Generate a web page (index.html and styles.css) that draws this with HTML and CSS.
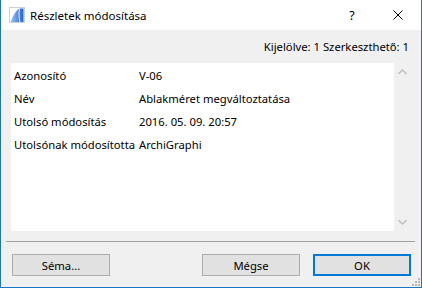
FILE: index.html
```html
<!DOCTYPE html>
<html>
<head>
<meta charset="utf-8">
<link rel="stylesheet" href="styles.css">
</head>
<body>
<div class="window">
  <div class="titlebar">
    <svg class="appicon" width="16" height="16" viewBox="0 0 16 16">
      <defs>
        <linearGradient id="g" x1="0" y1="0" x2="1" y2="0">
          <stop offset="0" stop-color="#9cc4f2"/>
          <stop offset="1" stop-color="#1f63d8"/>
        </linearGradient>
      </defs>
      <rect x="0.5" y="0.5" width="15" height="15" fill="#fff" stroke="#c8d2de"/>
      <path d="M1.5 15 C4 9 7 3 10.5 1.5 L14.5 1.5 L14.5 15 Z" fill="url(#g)"/>
      <path d="M10.5 1.5 C9.5 6 10 11 11 15" fill="none" stroke="#ffffff" stroke-width="0.9"/>
    </svg>
    <span class="title">Részletek módosítása</span>
    <span class="spacer"></span>
    <span class="tbtn">?</span>
    <span class="tbtn">
      <svg width="10" height="10" viewBox="0 0 10 10"><path d="M0.5 0.5 L9.5 9.5 M9.5 0.5 L0.5 9.5" stroke="#000" stroke-width="1"/></svg>
    </span>
  </div>
  <div class="status">Kijelölve: 1 Szerkeszthető: 1</div>
  <div class="panel">
    <div class="list">
      <div class="row"><span class="label">Azonosító</span><span class="value">V-06</span></div>
      <div class="row"><span class="label">Név</span><span class="value">Ablakméret megváltoztatása</span></div>
      <div class="row"><span class="label">Utolsó módosítás</span><span class="value">2016. 05. 09. 20:57</span></div>
      <div class="row"><span class="label">Utolsónak módosította</span><span class="value">ArchiGraphi</span></div>
    </div>
    <div class="scrollbar">
      <svg width="9" height="6" viewBox="0 0 9 6"><path d="M0.5 5 L4.5 1 L8.5 5" fill="none" stroke="#c2c2c2" stroke-width="1.6"/></svg>
      <svg width="9" height="6" viewBox="0 0 9 6"><path d="M0.5 1 L4.5 5 L8.5 1" fill="none" stroke="#c2c2c2" stroke-width="1.6"/></svg>
    </div>
  </div>
  <div class="separator"></div>
  <div class="buttons">
    <div class="btn">Séma...</div>
    <span class="spacer"></span>
    <div class="btn">Mégse</div>
    <div class="btn default">OK</div>
  </div>
  <svg class="grip" width="8" height="8" viewBox="0 0 8 8">
    <rect x="6" y="0" width="2" height="2" fill="#b8b8b8"/>
    <rect x="3" y="3" width="2" height="2" fill="#b8b8b8"/>
    <rect x="6" y="3" width="2" height="2" fill="#b8b8b8"/>
    <rect x="0" y="6" width="2" height="2" fill="#b8b8b8"/>
    <rect x="3" y="6" width="2" height="2" fill="#b8b8b8"/>
    <rect x="6" y="6" width="2" height="2" fill="#b8b8b8"/>
  </svg>
</div>
</body>
</html>
```
FILE: styles.css
```css
html, body {
  margin: 0;
  padding: 0;
  background: #ffffff;
}
.window {
  position: relative;
  width: 422px;
  height: 288px;
  box-sizing: border-box;
  border: 1px solid #1b75c9;
  border-top: none;
  background: #f0f0f0;
  display: flex;
  flex-direction: column;
  font-family: "Noto Sans", "Open Sans", sans-serif;
  font-size: 11.25px;
  color: #000;
}
.titlebar {
  height: 30px;
  background: #ffffff;
  display: flex;
  align-items: center;
}
.appicon {
  margin-left: 8px;
  flex: none;
}
.title {
  margin-left: 5px;
  font-size: 11.5px;
  color: #000;
}
.spacer {
  flex: 1;
}
.tbtn {
  width: 46px;
  height: 30px;
  display: flex;
  align-items: center;
  justify-content: center;
  font-size: 12.5px;
}
.status {
  height: 33px;
  display: flex;
  align-items: center;
  justify-content: flex-end;
  padding-right: 12px;
  box-sizing: border-box;
}
.panel {
  margin-left: 10px;
  width: 399px;
  height: 168px;
  display: flex;
  flex: none;
}
.list {
  width: 383px;
  background: #ffffff;
  padding-top: 1px;
  box-sizing: border-box;
}
.row {
  height: 23px;
  display: flex;
  align-items: center;
  padding-left: 3px;
}
.label {
  width: 125px;
  flex: none;
  white-space: nowrap;
}
.value {
  white-space: nowrap;
}
.scrollbar {
  width: 16px;
  display: flex;
  flex-direction: column;
  justify-content: space-between;
  align-items: center;
  padding: 6px 0 6px;
  box-sizing: border-box;
}
.separator {
  margin: 10px 6px 0 5px;
  height: 1px;
  background: #a0a0a0;
}
.buttons {
  display: flex;
  margin-top: 12px;
  padding: 0 10px 0 11px;
  gap: 13px;
}
.buttons .spacer {
  margin-left: -13px;
}
.btn {
  width: 98px;
  height: 22px;
  box-sizing: border-box;
  border: 1px solid #adadad;
  background: #e1e1e1;
  display: flex;
  align-items: center;
  justify-content: center;
}
.btn.default {
  border: 2px solid #0078d7;
}
.grip {
  position: absolute;
  right: 1px;
  bottom: 1px;
}
```
